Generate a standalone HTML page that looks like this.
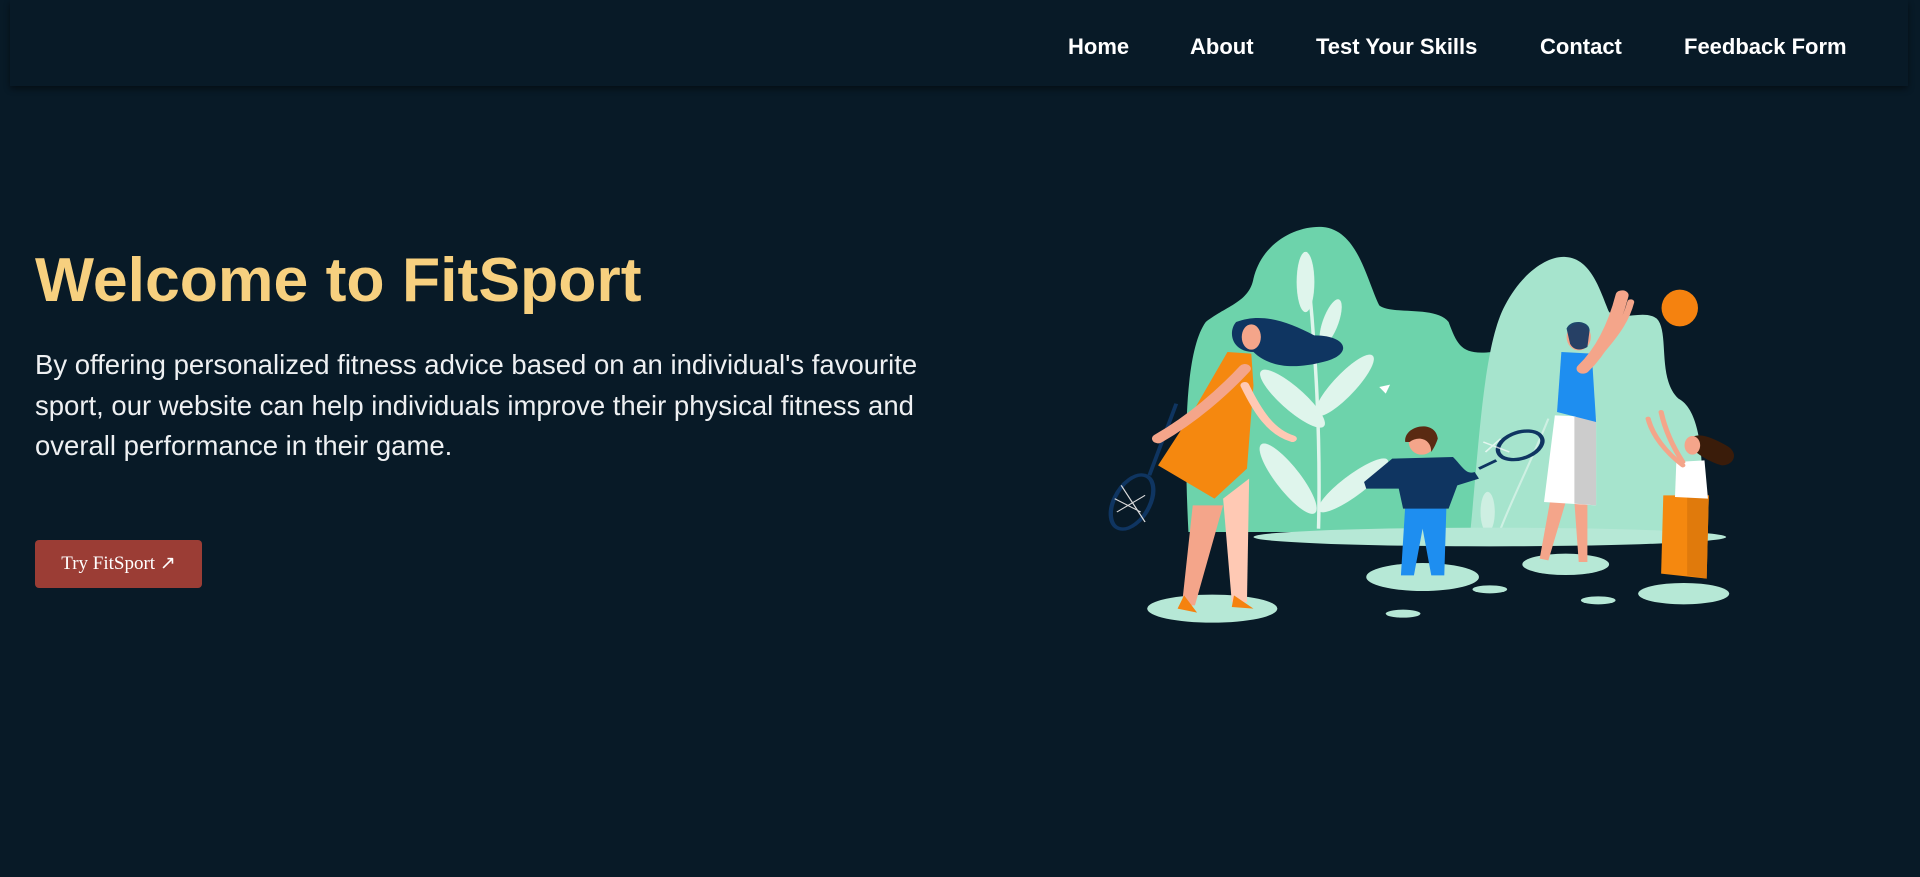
<!DOCTYPE html>
<html><head><meta charset="utf-8">
<style>
html,body{margin:0;padding:0;background:#081a27;width:1920px;height:877px;overflow:hidden;font-family:"Liberation Sans",Arial,sans-serif}
.nav{position:absolute;left:10px;top:0;width:1898px;height:86px;background:#081a27;box-shadow:0 3px 6px rgba(0,0,0,.45)}
.nav a{position:absolute;top:34px;color:#fff;font-weight:bold;font-size:22px;text-decoration:none;line-height:26px}
h1{position:absolute;left:35px;top:240px;margin:0;color:#f7d07f;font-size:62.5px;font-weight:bold;line-height:80px}
p{position:absolute;left:35px;top:345px;margin:0;width:900px;color:#eef0f2;font-size:27.5px;line-height:40.5px}
.btn{position:absolute;left:35px;top:540px;width:167px;height:48px;background:#9b3d35;border-radius:4px;color:#fff;font-family:"Liberation Serif",serif;font-size:19px;line-height:48px;text-align:center}
svg{position:absolute;left:1080px;top:212px}
</style></head><body>
<div class="nav">
<a style="left:1058px">Home</a>
<a style="left:1180px">About</a>
<a style="left:1306px">Test Your Skills</a>
<a style="left:1530px">Contact</a>
<a style="left:1674px">Feedback Form</a>
</div>
<h1>Welcome to FitSport</h1>
<p>By offering personalized fitness advice based on an individual's favourite sport, our website can help individuals improve their physical fitness and overall performance in their game.</p>
<div class="btn">Try FitSport ↗</div>
<svg width="680" height="430" viewBox="0 0 1568 1290" preserveAspectRatio="none">
<path d="M250,960 C240,700 240,420 290,330 C340,280 390,270 400,200 C420,90 500,40 560,45 C640,55 660,200 690,280 C720,310 820,280 850,330 C870,400 880,430 950,420 L960,960 Z" fill="#6dd3ab"/>
<path d="M900,960 C920,700 930,400 980,280 C1020,180 1080,130 1120,135 C1180,140 1200,240 1220,300 C1250,330 1300,290 1330,320 C1360,360 1330,500 1380,560 C1440,600 1440,800 1430,960 Z" fill="#a6e4cd"/>
<g fill="#dff5ec" stroke="#dff5ec">
<path d="M550,950 C555,700 545,400 520,120" fill="none" stroke-width="8"/>
<ellipse cx="520" cy="210" rx="20" ry="90"/>
<ellipse cx="578" cy="330" rx="18" ry="70" transform="rotate(15 578 330)"/>
<ellipse cx="490" cy="560" rx="30" ry="110" transform="rotate(-40 490 560)"/>
<ellipse cx="610" cy="520" rx="28" ry="110" transform="rotate(35 610 520)"/>
<ellipse cx="480" cy="800" rx="30" ry="120" transform="rotate(-30 480 800)"/>
<ellipse cx="630" cy="820" rx="28" ry="110" transform="rotate(45 630 820)"/>
<ellipse cx="940" cy="900" rx="16" ry="60" opacity=".7"/>
<path d="M970,950 C1000,850 1040,750 1080,620" fill="none" stroke-width="5" opacity=".7"/>
</g>
<ellipse cx="945" cy="975" rx="545" ry="28" fill="#b6e8d6"/>
<g fill="#b6e8d6">
<ellipse cx="305" cy="1190" rx="150" ry="42"/>
<ellipse cx="790" cy="1095" rx="130" ry="42"/>
<ellipse cx="1120" cy="1057" rx="100" ry="32"/>
<ellipse cx="1392" cy="1145" rx="105" ry="32"/>
<ellipse cx="945" cy="1132" rx="40" ry="12"/>
<ellipse cx="745" cy="1205" rx="40" ry="12"/>
<ellipse cx="1195" cy="1165" rx="40" ry="12"/>
</g>
<ellipse cx="1383" cy="288" rx="42" ry="55" fill="#f5820f"/>
<path d="M690,525 L715,518 L705,545 Z" fill="#fff"/>
<line x1="222" y1="575" x2="160" y2="790" stroke="#0f3561" stroke-width="9"/>
<ellipse cx="120" cy="870" rx="42" ry="85" transform="rotate(20 120 870)" fill="none" stroke="#0f3561" stroke-width="10"/>
<path d="M95,820 L150,930 M80,860 L140,900 M85,900 L150,850" stroke="#ddd" stroke-width="3"/>
<path d="M260,880 L235,1180 L265,1180 L330,880 Z" fill="#f4a58a"/>
<path d="M330,860 L350,1170 L385,1170 L390,800 Z" fill="#ffc9b4"/>
<path d="M240,1150 l-15,40 l45,12 z M355,1150 l-5,35 l50,5 z" fill="#f5820f"/>
<path d="M360,330 C420,300 480,330 540,370 C620,370 630,430 560,450 C500,470 440,470 400,420 C350,420 340,360 360,330 Z" fill="#0f3561"/>
<ellipse cx="395" cy="375" rx="22" ry="38" fill="#f4a58a"/>
<path d="M340,420 L395,425 L400,520 L385,770 L310,860 L180,760 L260,600 Z" fill="#f5880f"/>
<path d="M380,470 C330,540 260,620 180,680" stroke="#f4a58a" stroke-width="28" fill="none" stroke-linecap="round"/>
<path d="M380,520 C410,600 440,660 490,680" stroke="#ffc9b4" stroke-width="20" fill="none" stroke-linecap="round"/>
<path d="M750,880 L740,1090 L770,1090 L790,950 L810,1090 L840,1090 L845,880 Z" fill="#1e8ef0"/>
<path d="M720,740 L860,735 C880,760 890,790 910,780 L920,800 L870,820 L850,890 L745,890 L735,830 L660,830 L655,810 Z" fill="#0f3561"/>
<ellipse cx="788" cy="690" rx="30" ry="38" fill="#f4a58a"/>
<path d="M750,690 C745,640 820,620 825,680 C820,700 815,710 810,720 C810,680 780,670 760,690 Z" fill="#5a2a12"/>
<line x1="920" y1="770" x2="960" y2="745" stroke="#0f3561" stroke-width="8"/>
<ellipse cx="1015" cy="700" rx="55" ry="38" transform="rotate(-30 1015 700)" fill="none" stroke="#0f3561" stroke-width="10"/>
<path d="M930,690 L990,720 M935,720 L970,680" stroke="#fff" stroke-width="4" opacity=".7"/>
<path d="M1085,860 L1060,1040 L1080,1045 L1120,870 Z M1140,870 L1150,1050 L1170,1050 L1170,870 Z" fill="#f4a58a"/>
<path d="M1095,610 L1190,615 L1190,880 L1070,870 Z" fill="#fff"/>
<path d="M1140,615 L1190,615 L1190,880 L1140,875 Z" fill="#ccc"/>
<path d="M1110,420 L1180,425 L1190,630 L1100,600 Z" fill="#1e8ef0"/>
<path d="M1160,470 C1200,420 1230,350 1250,250" stroke="#f4a58a" stroke-width="30" fill="none" stroke-linecap="round"/>
<path d="M1200,420 C1240,360 1260,320 1270,270" stroke="#f4a58a" stroke-width="16" fill="none" stroke-linecap="round"/>
<ellipse cx="1150" cy="375" rx="28" ry="40" fill="#f4a58a"/>
<path d="M1122,350 C1130,320 1175,325 1175,355 L1170,405 C1150,420 1135,410 1130,395 Z" fill="#0f3561" opacity=".9"/>
<path d="M1345,850 L1450,850 L1445,1100 L1340,1085 Z" fill="#f5880f"/>
<path d="M1400,850 L1450,850 L1445,1100 L1400,1090 Z" fill="#e07a0c"/>
<path d="M1375,750 L1440,745 L1448,860 L1372,855 Z" fill="#fff"/>
<path d="M1390,750 C1370,710 1350,660 1340,600 M1390,760 C1350,720 1320,670 1310,620" stroke="#f4a58a" stroke-width="12" fill="none" stroke-linecap="round"/>
<path d="M1400,690 C1420,650 1460,680 1490,700 C1520,720 1510,760 1480,760 C1450,750 1430,730 1420,720 Z" fill="#3a1c0a"/>
<ellipse cx="1412" cy="700" rx="18" ry="28" fill="#f4a58a"/>
</svg>
</body></html>
